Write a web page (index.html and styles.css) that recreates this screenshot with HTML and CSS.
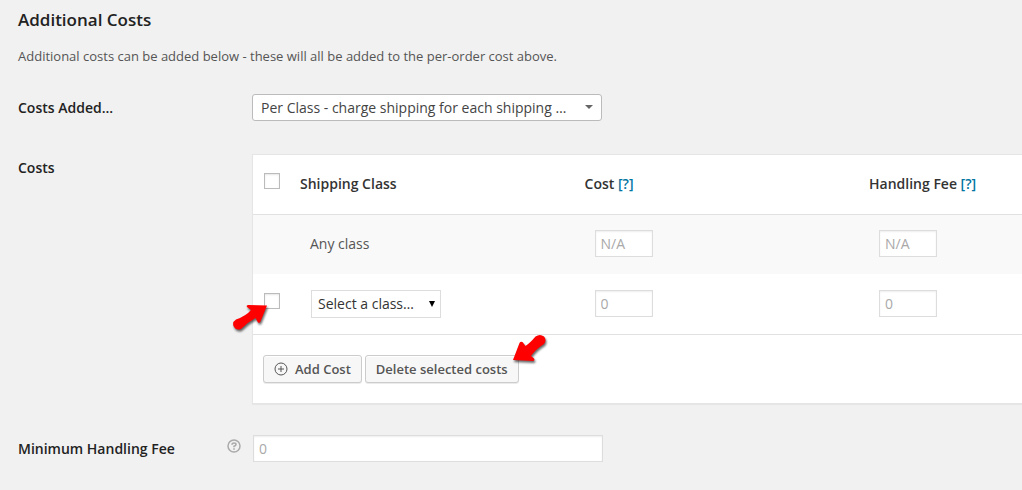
FILE: index.html
```html
<!DOCTYPE html>
<html lang="en">
<head>
    <meta charset="utf-8">
    <meta name="viewport" content="width=device-width, initial-scale=1">
    <title>Additional Costs</title>
    <link rel="stylesheet" href="styles.css">
</head>
<body>

<form class="settings">
    <h3>Additional Costs</h3>
    <p class="intro">Additional costs can be added below - these will all be added to the per-order cost above.</p>

    <div class="row">
        <div class="label"><label for="type">Costs Added...</label></div>
        <div class="chosen">
            <select id="type">
                <option>Per Class - charge shipping for each shipping …</option>
                <option>Per Order - charge shipping for the entire order</option>
                <option>Per Item - charge shipping for each item</option>
            </select>
            <svg class="caret" viewBox="0 0 8 4" aria-hidden="true"><path d="M0 0h8L4 4z" fill="#666"/></svg>
        </div>
    </div>

    <div class="row">
        <div class="label">Costs</div>
        <div class="panel">
            <table class="costs">
                <colgroup>
                    <col class="col-check">
                    <col class="col-wide">
                    <col class="col-wide">
                    <col>
                </colgroup>
                <thead>
                    <tr>
                        <th class="check"><input type="checkbox" aria-label="Select all"></th>
                        <th>Shipping Class</th>
                        <th>Cost <a href="#">[?]</a></th>
                        <th>Handling Fee <a href="#">[?]</a></th>
                    </tr>
                </thead>
                <tbody>
                    <tr class="alt">
                        <td class="check"></td>
                        <td>Any class</td>
                        <td><input type="text" placeholder="N/A" aria-label="Cost, any class"></td>
                        <td><input type="text" placeholder="N/A" aria-label="Handling fee, any class"></td>
                    </tr>
                    <tr>
                        <td class="check">
                            <input type="checkbox" aria-label="Select this cost">
                            <svg class="arrow arrow-check" viewBox="0 0 36 29" aria-hidden="true"><path d="M34 1.500L15 1Q13 1.500 14 3L18 6Q13 12 3 15.500Q-1 18 .500 22Q3 27 8 25Q15 18 22.500 14L25 18.500Q26.500 19.500 27.500 17.500Z" fill="#f00"/></svg>
                        </td>
                        <td>
                            <div class="class-select">
                                <select aria-label="Shipping class">
                                    <option>Select a class…</option>
                                </select>
                                <svg class="caret" viewBox="0 0 6 6" aria-hidden="true"><path d="M0 0h6L3 6z" fill="#000"/></svg>
                            </div>
                        </td>
                        <td><input type="text" placeholder="0" aria-label="Cost"></td>
                        <td><input type="text" placeholder="0" aria-label="Handling fee"></td>
                    </tr>
                </tbody>
            </table>
            <div class="actions">
                <button type="button">
                    <svg class="plus" viewBox="0 0 14 14" aria-hidden="true"><circle cx="7" cy="7" r="6" fill="none" stroke="#555"/><path d="M7 4v6M4 7h6" stroke="#555"/></svg>
                    Add Cost
                </button>
                <button type="button" class="delete">
                    Delete selected costs
                    <svg class="arrow arrow-delete" viewBox="0 0 36 29" aria-hidden="true"><path d="M1 26L21.500 27Q23 26 22 24.500L19 22Q24 15 32 10Q35 6 32 2.500Q28-.5 23.500 2.500Q18 9 13.500 12L10.500 8Q8.500 7 7.500 9Z" fill="#f00"/></svg>
                </button>
            </div>
        </div>
    </div>

    <div class="row">
        <div class="label">
            <label for="minimum">Minimum Handling Fee</label>
            <svg class="help" viewBox="0 0 14 14" aria-hidden="true"><circle cx="7" cy="7" r="6" fill="none" stroke="#aaa" stroke-width="1.500"/><path d="M5 5.700Q5 4 7 4Q9 4 9 5.500Q9 6.500 7 7.300V8.300M7 9.300v1.500" fill="none" stroke="#aaa" stroke-width="1.600"/></svg>
        </div>
        <input id="minimum" class="wide" type="text" placeholder="0">
    </div>
</form>

</body>
</html>
```

FILE: styles.css
```css
* {
    box-sizing: border-box;
}
body {
    margin: 0;
    background: #f1f1f1;
    color: #444;
    font-family: "Open Sans", sans-serif;
    font-size: 14px;
    line-height: 20px;
}
.settings {
    padding: 8px 0 0 18px;
}
h3 {
    margin: 0 0 14px;
    color: #222;
    font-size: 17px;
    font-weight: 600;
    line-height: 24px;
}
.intro {
    margin: 0 0 28px;
    color: #555;
    font-size: 13px;
}
.row {
    display: grid;
    grid-template-columns: 234px 1fr;
    margin-bottom: 31px;
}
.row:last-child {
    margin-bottom: 0;
}
.label {
    display: flex;
    justify-content: space-between;
    padding: 4px 11px 0 0;
    color: #222;
    font-weight: 600;
}
input,
select,
button {
    margin: 0;
    font-family: inherit;
    font-size: 14px;
}
select {
    display: block;
    width: 100%;
    appearance: none;
    background: #fff;
    color: #444;
}

/* top drop-down */
.chosen {
    position: relative;
    width: 350px;
    padding-bottom: 2px;
}
.chosen select {
    height: 27px;
    padding: 0 24px 0 8px;
    border: 1px solid #bbb;
    border-radius: 3px;
}
.chosen .caret {
    position: absolute;
    top: 11px;
    right: 9px;
    width: 8px;
    height: 4px;
}

/* costs table */
.panel {
    border: 1px solid #e5e5e5;
    border-right: 0;
    background: #fff;
    box-shadow: 0 1px 1px rgba(0, 0, 0, 0.04);
}
.costs {
    width: 100%;
    border-collapse: collapse;
    table-layout: fixed;
}
.col-check {
    width: 37px;
}
.col-wide {
    width: 37%;
}
th,
td {
    height: 60px;
    padding: 0 0 1px 20px;
    text-align: left;
}
th {
    height: 59px;
    padding: 0 0 0 10px;
    border-bottom: 1px solid #e1e1e1;
    color: #333;
    font-weight: 600;
}
th a {
    color: #0074a2;
    text-decoration: none;
}
td {
    color: #555;
}
.alt {
    background: #f9f9f9;
}
.check {
    position: relative;
    padding: 0 0 6px 11px;
}
input[type="checkbox"] {
    display: block;
    width: 16px;
    height: 16px;
    appearance: none;
    border: 1px solid #bbb;
    background: #fff;
    box-shadow: inset 0 1px 2px rgba(0, 0, 0, 0.1);
}
input[type="text"] {
    display: block;
    width: 58px;
    height: 27px;
    padding: 0 5px;
    border: 1px solid #ddd;
    background: #fff;
    box-shadow: inset 0 1px 2px rgba(0, 0, 0, 0.07);
}
input::placeholder {
    color: #a9a9a9;
}
input[type="text"].wide {
    width: 350px;
    margin-left: 1px;
}
.class-select {
    position: relative;
    width: 130px;
    margin-left: 1px;
}
.class-select select {
    height: 28px;
    padding: 0 20px 0 6px;
    border: 1px solid #ddd;
    color: #333;
}
.class-select .caret {
    position: absolute;
    top: 11px;
    right: 6px;
    width: 6px;
    height: 6px;
}

/* buttons */
.actions {
    display: flex;
    gap: 3px;
    padding: 20px 10px;
    border-top: 1px solid #e1e1e1;
}
button {
    display: flex;
    position: relative;
    align-items: center;
    gap: 7px;
    height: 28px;
    padding: 0 10px;
    border: 1px solid #ccc;
    border-radius: 3px;
    background: #f7f7f7;
    box-shadow: inset 0 1px 0 #fff, 0 1px 0 rgba(0, 0, 0, 0.08);
    color: #555;
    font-size: 13px;
    font-weight: 600;
    white-space: nowrap;
}
.plus,
.help {
    width: 14px;
    height: 14px;
}

/* red pointers */
.arrow {
    position: absolute;
    width: 36px;
    height: 29px;
    overflow: visible;
    filter: drop-shadow(1px 2px 1px rgba(0, 0, 0, 0.6));
}
.arrow-check {
    top: 30px;
    left: -20px;
}
.arrow-delete {
    right: -30px;
    bottom: 19px;
}
```
